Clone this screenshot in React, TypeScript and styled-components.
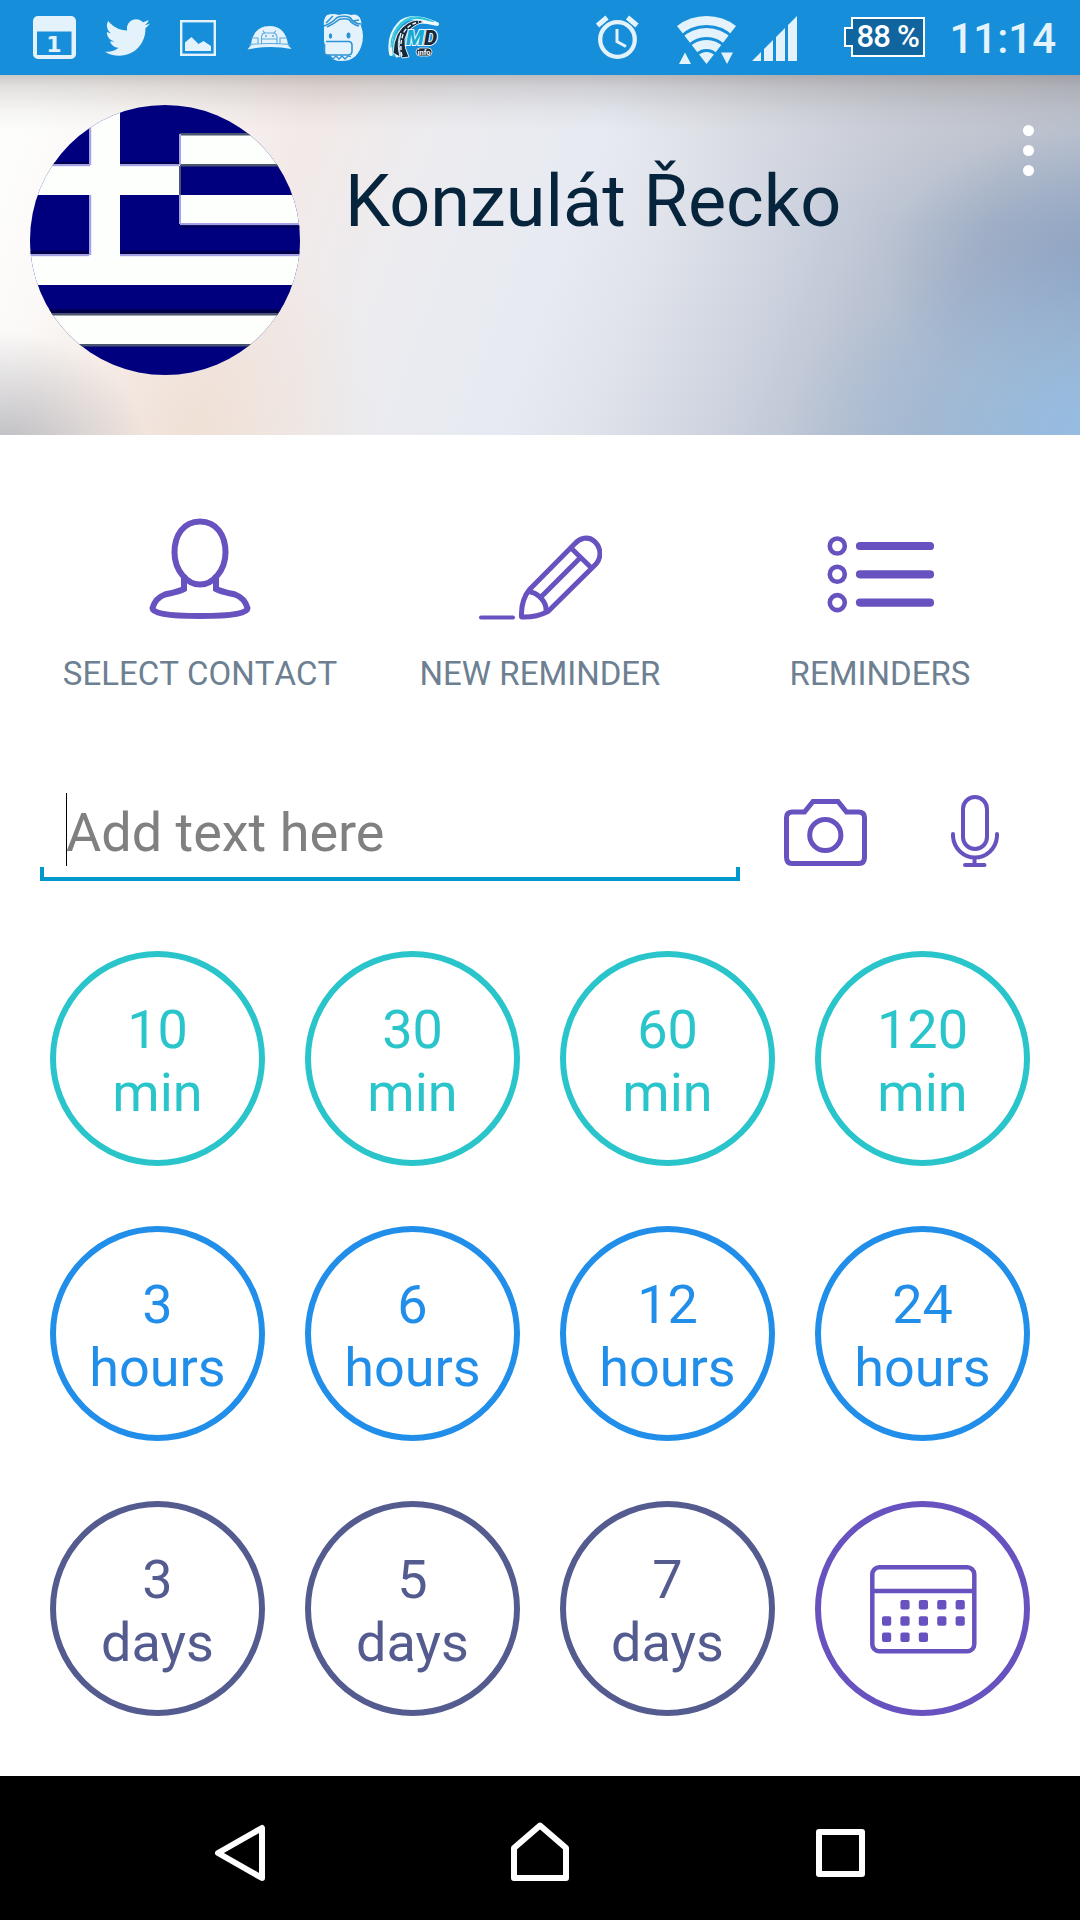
import React from "react";
import styled, { createGlobalStyle } from "styled-components";
import { FaTwitter } from "react-icons/fa";

const PURPLE = "#6852bf";
const TEAL = "#29c5cb";
const BLUE = "#218eea";
const SLATE = "#545b8f";
const STATUS_ICON = "#e4f3fb";
const STATUS_BLUE = "#168eda";

const GlobalStyle = createGlobalStyle`
  * { box-sizing: border-box; }
  body {
    margin: 0;
    background: #fff;
    font-family: Roboto, "Noto Sans", sans-serif;
  }
  svg { display: block; }
`;

const Screen = styled.div`
  width: 1080px;
  height: 1920px;
  display: flex;
  flex-direction: column;
  background: #fff;
  overflow: hidden;
`;

const StatusBar = styled.div`
  height: 75px;
  flex: none;
  display: flex;
  justify-content: space-between;
  background: ${STATUS_BLUE};
  color: ${STATUS_ICON};
  padding: 0 24px 0 33px;
`;

const StatusGroup = styled.div`
  display: flex;
  align-items: flex-start;
`;

const StatusItem = styled.div<{ $gap?: number; $top: number }>`
  margin-left: ${(p) => p.$gap ?? 0}px;
  margin-top: ${(p) => p.$top}px;
`;

const Battery = styled.div`
  position: relative;
  width: 81px;
  height: 40px;
`;

const BatteryText = styled.span`
  position: absolute;
  left: 12px;
  top: 0;
  line-height: 40px;
  font-size: 31px;
  font-weight: 500;
  letter-spacing: -0.8px;
  color: #fff;
  white-space: pre;
`;

const Clock = styled.div`
  font-size: 42px;
  font-weight: 500;
  line-height: 48px;
  white-space: nowrap;
`;

const Header = styled.header`
  height: 360px;
  flex: none;
  display: flex;
  align-items: flex-start;
  padding: 30px 46px 0 30px;
  background:
    linear-gradient(180deg, rgba(60, 50, 45, 0.25) 0px, rgba(60, 50, 45, 0.14) 12px, rgba(60, 50, 45, 0.04) 36px, transparent 56px),
    radial-gradient(ellipse 150px 130px at 0px 385px, rgba(165, 165, 172, 0.8), transparent),
    radial-gradient(ellipse 190px 210px at 195px 350px, rgba(239, 222, 210, 0.8), transparent),
    radial-gradient(ellipse 330px 200px at 1120px 360px, rgba(146, 190, 232, 0.95), rgba(152, 188, 222, 0.55) 50%, transparent),
    radial-gradient(ellipse 220px 140px at 1100px 195px, rgba(136, 158, 192, 0.8), transparent),
    radial-gradient(ellipse 420px 150px at 1000px 0px, rgba(212, 210, 212, 0.65), transparent),
    linear-gradient(110deg, #fdfdfc 40px, #faf6f4 164px, #f3eae8 305px, #ececf0 438px, #e7eaf2 588px, #e0e3ea 673px, #cfd4e0 786px, #bcc4d3 885px, #acb7c9 983px, #a3b3c9 1096px);
`;

const Avatar = styled.div`
  width: 270px;
  height: 270px;
  border-radius: 50%;
  overflow: hidden;
`;

const ContactName = styled.h1`
  margin: 54px 0 0 45px;
  flex: 1;
  font-size: 72px;
  font-weight: 400;
  line-height: 86px;
  color: #06243b;
  white-space: nowrap;
`;

const MenuButton = styled.div`
  display: flex;
  flex-direction: column;
  gap: 9px;
  margin-top: 20px;
`;

const MenuDot = styled.i`
  width: 11px;
  height: 11px;
  border-radius: 50%;
  background: #fff;
`;

const Actions = styled.nav`
  flex: none;
  display: grid;
  grid-template-columns: repeat(3, 340px);
  padding: 83px 30px 0;
`;

const Action = styled.div`
  display: flex;
  flex-direction: column;
  align-items: center;
`;

const ActionLabel = styled.span`
  margin-top: 34px;
  font-size: 33px;
  line-height: 40px;
  font-kerning: none;
  color: #6d8092;
  white-space: nowrap;
`;

const Composer = styled.div`
  flex: none;
  display: flex;
  align-items: flex-start;
  height: 90px;
  margin-top: 97px;
  padding-left: 40px;
`;

const Field = styled.div`
  width: 700px;
  height: 90px;
  display: flex;
  align-items: flex-start;
  padding: 2px 0 0 26px;
  background:
    linear-gradient(#0199cd, #0199cd) 0 100% / 4px 14px no-repeat,
    linear-gradient(#0199cd, #0199cd) 100% 100% / 4px 14px no-repeat,
    linear-gradient(#0199cd, #0199cd) 0 100% / 100% 4px no-repeat;
`;

const Caret = styled.i`
  width: 1px;
  height: 73px;
  margin-right: -1px;
  background: #000;
`;

const Placeholder = styled.span`
  font-size: 54px;
  line-height: 63px;
  margin-top: 8px;
  color: #808080;
  white-space: nowrap;
`;

const FieldIcon = styled.div<{ $left: number; $top: number }>`
  margin: ${(p) => p.$top}px 0 0 ${(p) => p.$left}px;
`;

const Grid = styled.div`
  flex: none;
  display: grid;
  grid-template-columns: repeat(4, 215px);
  grid-auto-rows: 215px;
  column-gap: 40px;
  row-gap: 60px;
  padding: 70px 50px 0;
`;

const Bubble = styled.div<{ $color: string; $pad?: string }>`
  border: 6px solid ${(p) => p.$color};
  border-radius: 50%;
  color: ${(p) => p.$color};
  display: flex;
  flex-direction: column;
  align-items: center;
  justify-content: center;
  padding: ${(p) => p.$pad ?? "4px 0 0"};
  font-size: 54px;
  line-height: 63px;
`;

const BubbleLine = styled.span`
  display: block;
`;

const NavBar = styled.footer`
  height: 144px;
  margin-top: auto;
  flex: none;
  display: grid;
  grid-template-columns: 298px 305px auto;
  align-items: start;
  background: #000;
  padding: 44px 0 0 213px;
`;

const Flag = () => (
  <svg width="270" height="270" viewBox="0 0 270 270">
    <rect width="270" height="270" fill="#00007f" />
    <g fill="#fdfffc">
      <rect x="60" y="0" width="30" height="151" />
      <rect x="0" y="60" width="150" height="30" />
      <rect x="150" y="30" width="120" height="30" />
      <rect x="150" y="90" width="120" height="30" />
      <rect x="0" y="150" width="270" height="30" />
      <rect x="0" y="210" width="270" height="30" />
    </g>
    <g fill="#4a5570">
      <rect x="150" y="28" width="120" height="2.5" />
      <rect x="150" y="59" width="120" height="2.5" />
      <rect x="0" y="208" width="270" height="2.5" />
      <rect x="0" y="239" width="270" height="2.5" />
      <rect x="149" y="61" width="2" height="29" />
    </g>
    <g fill="#a4a2e4">
      <rect x="0" y="59" width="60" height="2.2" />
      <rect x="90" y="59" width="59" height="2.2" />
      <rect x="150" y="118" width="120" height="2.2" />
      <rect x="0" y="149" width="59" height="2.2" />
      <rect x="90" y="149" width="180" height="2.2" />
      <rect x="149" y="90" width="2" height="29" />
      <rect x="149" y="29" width="2" height="31" />
      <rect x="59" y="0" width="2.2" height="60" />
      <rect x="59" y="90" width="2.2" height="60" />
    </g>
    <g fill="#00004e">
      <rect x="0" y="57" width="58" height="2" />
      <rect x="91" y="57" width="58" height="2" />
      <rect x="0" y="146" width="58" height="3" />
      <rect x="91" y="146" width="179" height="3" />
      <rect x="150" y="120.500" width="120" height="2" />
      <rect x="0" y="204" width="270" height="4" />
    </g>
  </svg>
);

const CalendarDayIcon = () => (
  <svg width="43" height="43" viewBox="0 0 43 43">
    <path
      fillRule="evenodd"
      fill={STATUS_ICON}
      d="M5 0H38a5 5 0 0 1 5 5V38a5 5 0 0 1-5 5H5a5 5 0 0 1-5-5V5a5 5 0 0 1 5-5ZM4 15.500V39H38.500V15.500Z"
    />
    <text x="21" y="36" textAnchor="middle" fontFamily="DejaVu Sans" fontWeight="700" fontSize="22" fill={STATUS_ICON}>
      1
    </text>
  </svg>
);

const PictureIcon = () => (
  <svg width="36" height="36" viewBox="0 0 36 36">
    <rect x="1.200" y="1.200" width="33.600" height="33.600" fill="none" stroke={STATUS_ICON} strokeWidth="2.400" />
    <path d="M5 31V22.500L11.500 17L18.500 24L23.500 21L31 26V31Z" fill={STATUS_ICON} />
  </svg>
);

const DomeIcon = () => (
  <svg width="45" height="26" viewBox="0 0 45 26">
    <path d="M4 20C5 8 12 1 22.500 1S40 8 41 20L44.500 24Q22.500 20 0.500 24.500Z" fill={STATUS_ICON} />
    <g fill="none" stroke="#5aa9de" strokeWidth="1.100">
      <path d="M14.500 19V12Q15 8 18 8H26Q29.500 8 30 12V19M17.500 8L16 5.500M27 8L29 5.500M4 13H11V19M33 19V13H40M14.500 14H30M2 19.500Q22.500 17.500 43 19.500" />
    </g>
    <circle cx="19" cy="11" r="1" fill="#5aa9de" />
    <circle cx="26" cy="11" r="1" fill="#5aa9de" />
  </svg>
);

const MascotIcon = () => (
  <svg width="41" height="48" viewBox="0 0 41 48">
    <path
      d="M4 1Q10-1 16 1Q22-1 28 1Q34-1 37 4Q39 8 38 12Q42 22 38 33Q33 47 19 47Q8 47 7 41Q0 41 1 33Q2 30 1 27V12Q0 5 4 1Z"
      fill={STATUS_ICON}
    />
    <g fill="none" stroke="#2c93d5" strokeWidth="1.600">
      <path d="M1 12Q9 9 14 3.500Q21 1 27 3.500Q31 10 38 10M3 9L10 2M30 7L36 6M4 13Q11 10 16 5.500Q22 4 26 5.500Q30 11 36 12" />
      <path d="M3 27.500H26Q29 28 29 31V37Q29 41 25 41H4Q1.500 41 1.500 38V30" />
      <path d="M7 42L10 45L13 42L16 45L19 42L22 45L25 42L28 43" strokeWidth="1.300" />
    </g>
    <ellipse cx="7.500" cy="22" rx="1.700" ry="2.800" fill="#2c93d5" />
    <ellipse cx="25.500" cy="21.500" rx="2" ry="3" fill="#2c93d5" />
  </svg>
);

const RoadInfoIcon = () => (
  <svg width="52" height="45" viewBox="0 0 52 45">
    <g fill="none" strokeLinecap="round">
      <path d="M3 39Q0 21 11 9T49 9" stroke="#e8f7fb" strokeWidth="4" />
      <path d="M6 41Q2 20 14 9T45 7" stroke="#2bc4dc" strokeWidth="2" />
      <path d="M3 32Q3 17 13 8T34 3" stroke="#2bc4dc" strokeWidth="1.200" />
      <path d="M9 41Q4 23 16 12Q27 4 47 9" stroke="#f1fafc" strokeWidth="3" />
    </g>
    <path d="M5 38Q6 16 20 8Q29 3 36 7Q20 11 17 24Q16 33 21 42L14 43Q9 33 13 18Q8 27 12 42Z" fill="#17293b" stroke="#f1fafc" strokeWidth="0.900" />
    <path d="M14 41Q11 29 16 17Q21 9 31 7" fill="none" stroke="#f1fafc" strokeWidth="1.400" strokeDasharray="4 2" />
    <g fontFamily="Roboto" fontSize="21" fontWeight="900" fontStyle="italic" stroke="#f1fafc" strokeWidth="2" paintOrder="stroke">
      <text x="18" y="30" fill="#15a9d5">M</text>
      <text x="36" y="30" fill="#17293b">D</text>
    </g>
    <rect x="28" y="33" width="16" height="8" rx="4" fill="#17293b" stroke="#f1fafc" strokeWidth="0.800" />
    <text x="36" y="39.700" textAnchor="middle" fontFamily="Roboto" fontWeight="700" fontSize="7.500" fill="#fff">
      info
    </text>
  </svg>
);

const AlarmIcon = () => (
  <svg width="43" height="44" viewBox="0 0 43 44" fill="none" stroke={STATUS_ICON}>
    <circle cx="21.500" cy="24.500" r="17.300" strokeWidth="4.300" />
    <path d="M1.500 10.500L11 2.500M31.500 2.500L41 10.500" strokeWidth="5" />
    <path d="M21 14V26.500L30 31.500" strokeWidth="3" />
  </svg>
);

const WifiIcon = () => (
  <svg width="60" height="48" viewBox="0 0 60 48">
    <defs>
      <clipPath id="fan">
        <path d="M0 10L29.500 48L59 10V-5H0Z" />
      </clipPath>
    </defs>
    <g clipPath="url(#fan)" fill="none" stroke={STATUS_ICON} strokeWidth="9">
      <circle cx="29.500" cy="48" r="43.500" />
      <circle cx="29.500" cy="48" r="31.500" />
      <circle cx="29.500" cy="48" r="19.500" />
      <circle cx="29.500" cy="48" r="6" strokeWidth="12" />
    </g>
    <path d="M2 48L8 36.500L14 48ZM44 36.500H56L50 48Z" fill={STATUS_ICON} />
  </svg>
);

const SignalIcon = () => (
  <svg width="45" height="45" viewBox="0 0 45 45">
    <path d="M0 45L9 36V45ZM12 45V33L21 24V45ZM24 45V21L33 12V45ZM36 45V9L45 0V45Z" fill={STATUS_ICON} />
  </svg>
);

const BatteryShape = () => (
  <svg width="81" height="40" viewBox="0 0 81 40">
    <path d="M8 1H80V39H8V29H1V11H8Z" fill="#10659f" stroke="#fff" strokeWidth="2" />
  </svg>
);

const PersonIcon = () => (
  <svg width="102" height="102" viewBox="0 0 102 102" fill="none" stroke={PURPLE} strokeWidth="6">
    <path d="M51 3.500C34 3.500 25.500 18 25.500 34.500C25.500 52 38 66.500 51 66.500S76.500 52 76.500 34.500C76.500 18 68 3.500 51 3.500Z" />
    <path d="M35 57V71C29 74 22 75 16 76.500C9 79 5 85 3.500 90C3 95 17 98 51 98S99 95 98.500 90C97 85 93 79 86 76.500C80 75 73 74 67 71V57" />
  </svg>
);

const PencilIcon = () => (
  <svg width="124" height="102" viewBox="-1 0 124 102" fill="none" stroke={PURPLE} strokeWidth="5" strokeLinejoin="round">
    <path d="M2 99.500H34" strokeWidth="4" strokeLinecap="round" />
    <path d="M42.500 99C42 89 45 78 51 71L96 25.500C101 20 109 18 115 23C122 29 123 39 117 46L69 93.500C61 97.500 52 99.500 42.500 99Z" />
    <path d="M92 30L111.500 49M101.500 39.500L62 79M51 74C59 75 68 84 67 93" />
  </svg>
);

const ListIcon = () => (
  <svg width="107" height="102" viewBox="-0.500 0 107 102" fill="none" stroke={PURPLE}>
    {[28, 56.3, 84.6].map((y) => (
      <g key={y}>
        <circle cx="9.800" cy={y} r="7.500" strokeWidth="4.600" />
        <path d={`M32.500 ${y}H102.500`} strokeWidth="8.200" strokeLinecap="round" />
      </g>
    ))}
  </svg>
);

const CameraIcon = () => (
  <svg width="83" height="67" viewBox="0 0 83 67" fill="none" stroke={PURPLE} strokeWidth="5">
    <path d="M8 13H20.500L29 2.500H54L62.500 13H75Q80.500 13.500 80.500 18.500V58Q80.500 64.500 75 64.500H8Q2.500 64.500 2.500 58V18.500Q2.500 13.500 8 13Z" />
    <circle cx="41.300" cy="36" r="15.600" />
  </svg>
);

const MicIcon = () => (
  <svg width="48" height="73" viewBox="0 0 48 73" fill="none" stroke={PURPLE} strokeWidth="4" strokeLinecap="round">
    <rect x="12" y="2" width="24" height="52" rx="12" />
    <path d="M2 39V41.500C3 54 13 62.500 24 62.500S45 54 46 41.500V39M23.500 63V70M14 70H33.500" />
  </svg>
);

const CalendarIcon = () => {
  const rows = [
    { y: 35, columns: [1, 2, 3, 4] },
    { y: 51.2, columns: [0, 1, 2, 3, 4] },
    { y: 67.4, columns: [0, 1, 2] },
  ];
  return (
    <svg width="107" height="89" viewBox="0 0 107 89">
      <rect x="2.300" y="2.300" width="102" height="84" rx="7" fill="none" stroke={PURPLE} strokeWidth="4.500" />
      <path d="M2 26H104" stroke={PURPLE} strokeWidth="4.500" />
      {rows.map((row) =>
        row.columns.map((c) => (
          <rect key={`${row.y}-${c}`} x={12 + c * 18.4} y={row.y} width="9.200" height="9.600" rx="2" fill={PURPLE} />
        )),
      )}
    </svg>
  );
};

const BackIcon = () => (
  <svg width="54" height="62" viewBox="0 0 54 62" fill="none" stroke="#fff" strokeWidth="6" strokeLinejoin="round">
    <path d="M49 8V58L5 33Z" />
  </svg>
);

const HomeIcon = () => (
  <svg width="58" height="62" viewBox="0 0 58 62" fill="none" stroke="#fff" strokeWidth="6" strokeLinejoin="round">
    <path d="M3 58V28L29 5.500L55 28V58Z" />
  </svg>
);

const RecentIcon = () => (
  <svg width="51" height="62" viewBox="0 0 51 62" fill="none" stroke="#fff" strokeWidth="6" strokeLinejoin="round">
    <rect x="3" y="12" width="43" height="42" />
  </svg>
);

const DELAYS = [
  { amount: "10", unit: "min", color: TEAL },
  { amount: "30", unit: "min", color: TEAL },
  { amount: "60", unit: "min", color: TEAL },
  { amount: "120", unit: "min", color: TEAL },
  { amount: "3", unit: "hours", color: BLUE },
  { amount: "6", unit: "hours", color: BLUE },
  { amount: "12", unit: "hours", color: BLUE },
  { amount: "24", unit: "hours", color: BLUE },
  { amount: "3", unit: "days", color: SLATE },
  { amount: "5", unit: "days", color: SLATE },
  { amount: "7", unit: "days", color: SLATE },
];

export default function App() {
  return (
    <Screen>
      <GlobalStyle />
      <StatusBar>
        <StatusGroup>
          <StatusItem $top={16}><CalendarDayIcon /></StatusItem>
          <StatusItem $gap={29} $top={15}><FaTwitter size={45} color={STATUS_ICON} /></StatusItem>
          <StatusItem $gap={30} $top={20}><PictureIcon /></StatusItem>
          <StatusItem $gap={31} $top={25}><DomeIcon /></StatusItem>
          <StatusItem $gap={31} $top={14}><MascotIcon /></StatusItem>
          <StatusItem $gap={24} $top={15}><RoadInfoIcon /></StatusItem>
        </StatusGroup>
        <StatusGroup>
          <StatusItem $top={15}><AlarmIcon /></StatusItem>
          <StatusItem $gap={38} $top={16}><WifiIcon /></StatusItem>
          <StatusItem $gap={15} $top={16}><SignalIcon /></StatusItem>
          <StatusItem $gap={47} $top={17}>
            <Battery>
              <BatteryShape />
              <BatteryText>88 %</BatteryText>
            </Battery>
          </StatusItem>
          <StatusItem $gap={24} $top={15}><Clock>11:14</Clock></StatusItem>
        </StatusGroup>
      </StatusBar>

      <Header>
        <Avatar>
          <Flag />
        </Avatar>
        <ContactName>Konzulát Řecko</ContactName>
        <MenuButton>
          <MenuDot />
          <MenuDot />
          <MenuDot />
        </MenuButton>
      </Header>

      <Actions>
        <Action>
          <PersonIcon />
          <ActionLabel>SELECT CONTACT</ActionLabel>
        </Action>
        <Action>
          <PencilIcon />
          <ActionLabel>NEW REMINDER</ActionLabel>
        </Action>
        <Action>
          <ListIcon />
          <ActionLabel>REMINDERS</ActionLabel>
        </Action>
      </Actions>

      <Composer>
        <Field>
          <Caret />
          <Placeholder>Add text here</Placeholder>
        </Field>
        <FieldIcon $left={44} $top={8}><CameraIcon /></FieldIcon>
        <FieldIcon $left={84} $top={4}><MicIcon /></FieldIcon>
      </Composer>

      <Grid>
        {DELAYS.map((d) => (
          <Bubble key={d.amount + d.unit} $color={d.color}>
            <BubbleLine>{d.amount}</BubbleLine>
            <BubbleLine>{d.unit}</BubbleLine>
          </Bubble>
        ))}
        <Bubble $color={PURPLE} $pad="2px 0 0 2px">
          <CalendarIcon />
        </Bubble>
      </Grid>

      <NavBar>
        <BackIcon />
        <HomeIcon />
        <RecentIcon />
      </NavBar>
    </Screen>
  );
}
